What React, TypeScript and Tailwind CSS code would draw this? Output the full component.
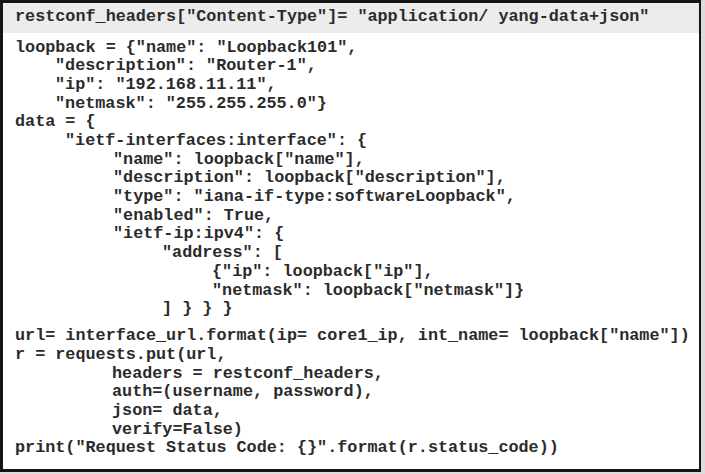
const top: [number, string][] = [
  [0, 'loopback = {"name": "Loopback101",'],
  [40, '"description": "Router-1",'],
  [40, '"ip": "192.168.11.11",'],
  [40, '"netmask": "255.255.255.0"}'],
  [0, "data = {"],
  [50, '"ietf-interfaces:interface": {'],
  [98, '"name": loopback["name"],'],
  [98, '"description": loopback["description"],'],
  [98, '"type": "iana-if-type:softwareLoopback",'],
  [98, '"enabled": True,'],
  [98, '"ietf-ip:ipv4": {'],
  [147, '"address": ['],
  [197, '{"ip": loopback["ip"],'],
  [197, '"netmask": loopback["netmask"]}'],
  [147, "] } } }"],
];

const bottom: [number, string][] = [
  [0, 'url= interface_url.format(ip= core1_ip, int_name= loopback["name"])'],
  [0, "r = requests.put(url,"],
  [97, "headers = restconf_headers,"],
  [97, "auth=(username, password),"],
  [97, "json= data,"],
  [97, "verify=False)"],
  [0, 'print("Request Status Code: {}".format(r.status_code))'],
];

function Line({ indent, text }: { indent: number; text: string }) {
  return (
    <div className="h-[18.7px] leading-[18.7px] whitespace-pre" style={{ paddingLeft: indent }}>
      {text}
    </div>
  );
}

export default function App() {
  return (
    <div className="w-[705px] h-[474px] bg-[#dcdcdc] overflow-hidden">
      <div
        className="w-[701px] h-[472px] bg-white border-t-[3px] border-l-[3px] border-r-[2px] border-b-[3px] border-[#151515] text-[#2b2b2b] font-bold text-[16.8px]"
        style={{ fontFamily: '"Liberation Mono", "Courier New", monospace' }}
      >
        <div className="h-[30px] bg-[#ececec] pl-[12px] leading-[27px] whitespace-pre">
          {'restconf_headers["Content-Type"]= "application/ yang-data+json"'}
        </div>
        <div className="pl-[12px] pt-[5.6px]">
          {top.map(([i, t], k) => (
            <Line key={k} indent={i} text={t} />
          ))}
          <div className="h-[8.3px]" />
          {bottom.map(([i, t], k) => (
            <Line key={k} indent={i} text={t} />
          ))}
        </div>
      </div>
    </div>
  );
}
